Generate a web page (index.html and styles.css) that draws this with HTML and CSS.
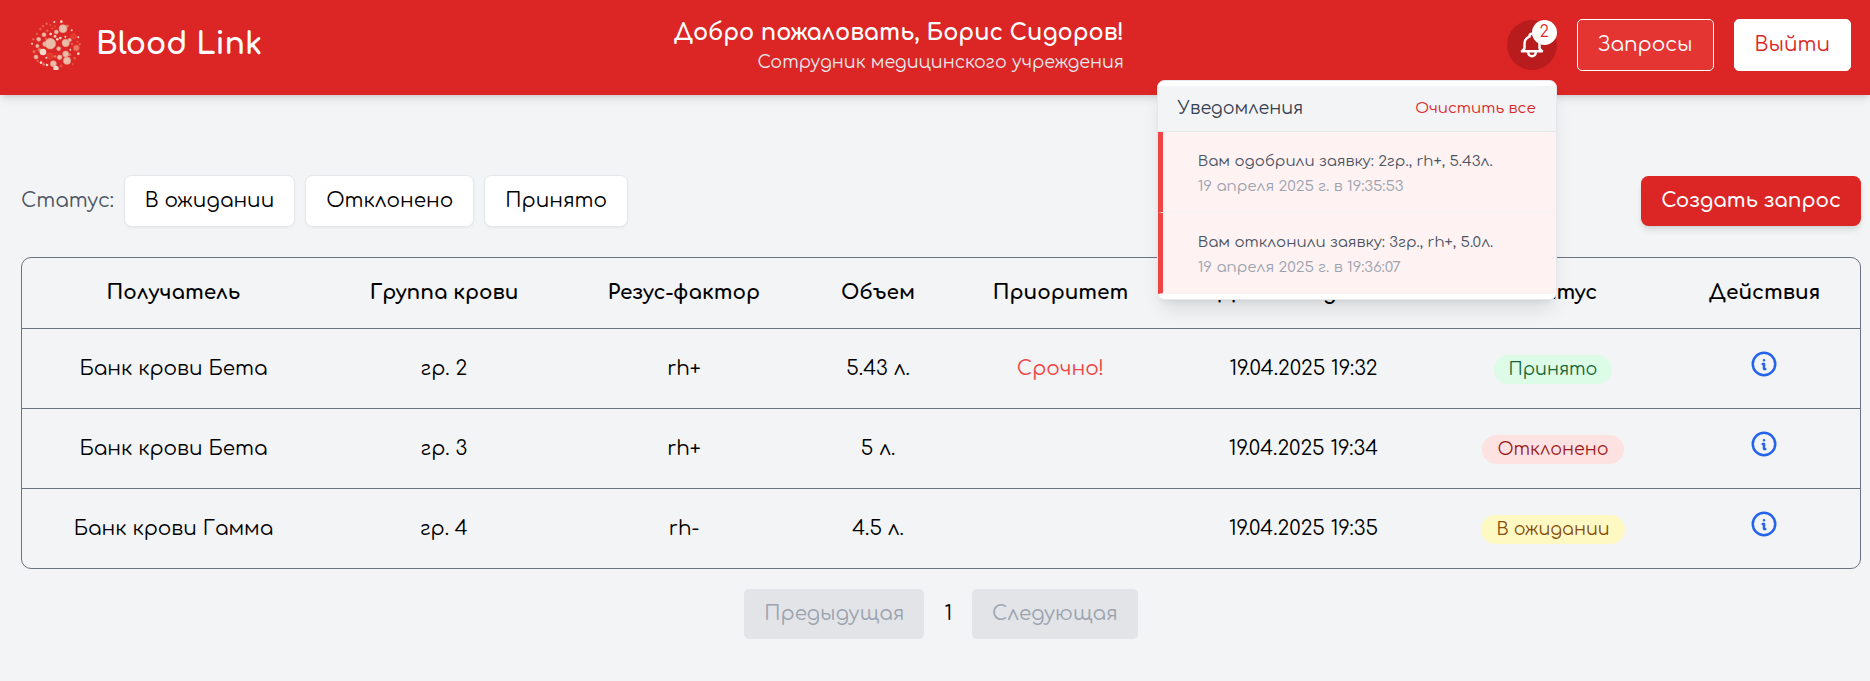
FILE: index.html
```html
<!DOCTYPE html>
<html lang="ru">
<head>
<meta charset="utf-8">
<title>Blood Link</title>
<link rel="stylesheet" href="styles.css">
</head>
<body>
<svg class="defs" aria-hidden="true">
  <symbol id="info" viewBox="0 0 24 24"><path d="M3 12a9 9 0 1 0 18 0a9 9 0 0 0 -18 0M12 9h.01M11 12h1v4h1" fill="none" stroke="currentColor" stroke-width="2" stroke-linecap="round" stroke-linejoin="round"/></symbol>
</svg>
<header class="topbar">
  <div class="brand">
    <svg class="logo" viewBox="15 15 150 150">
      <g fill="#ec7865" stroke="#e2503f" stroke-width="2">
        <circle cx="151" cy="99" r="9"/><circle cx="143" cy="64" r="8" fill="#e53a2b"/><circle cx="72" cy="123" r="9" fill="#e53a2b"/><circle cx="41" cy="105" r="6"/><circle cx="131" cy="119" r="4"/><circle cx="60" cy="72" r="3"/><circle cx="87" cy="124" r="4"/><circle cx="33" cy="57" r="3"/><circle cx="43" cy="42" r="3"/><circle cx="51" cy="33" r="3"/><circle cx="62" cy="26" r="3"/><circle cx="124" cy="33" r="4"/><circle cx="24" cy="110" r="4"/><circle cx="35" cy="138" r="3"/><circle cx="53" cy="148" r="4"/><circle cx="146" cy="130" r="3"/><circle cx="161" cy="88" r="3"/><circle cx="64" cy="47" r="3"/><circle cx="79" cy="40" r="2"/><circle cx="73" cy="30" r="2"/><circle cx="86" cy="34" r="2"/><circle cx="22" cy="73" r="3"/><circle cx="138" cy="87" r="3"/><circle cx="154" cy="80" r="2"/><circle cx="105" cy="153" r="3"/><circle cx="140" cy="147" r="2"/>
      </g>
      <g fill="#e9bda9" stroke="#e69a8a" stroke-width="2">
        <circle cx="111" cy="41" r="12"/><circle cx="57" cy="87" r="7"/><circle cx="73" cy="86" r="16"/><circle cx="119" cy="84" r="11"/><circle cx="131" cy="75" r="5"/><circle cx="123" cy="137" r="11"/><circle cx="119" cy="117" r="9"/><circle cx="82" cy="146" r="9"/><circle cx="54" cy="59" r="6"/><circle cx="38" cy="73" r="6"/><circle cx="91" cy="51" r="6"/><circle cx="98" cy="101" r="6"/><circle cx="101" cy="127" r="7"/><circle cx="30" cy="126" r="6"/><circle cx="34" cy="93" r="5"/>
      </g>
      <g fill="#f0d9c9">
        <circle cx="51" cy="111" r="10"/><circle cx="90" cy="160" r="8"/><circle cx="106" cy="20" r="4"/><circle cx="85" cy="21" r="3"/><circle cx="18" cy="86" r="3"/><circle cx="74" cy="57" r="4"/><circle cx="87" cy="64" r="4"/><circle cx="103" cy="69" r="4"/><circle cx="94" cy="73" r="4"/><circle cx="61" cy="128" r="3"/><circle cx="63" cy="150" r="4"/><circle cx="133" cy="104" r="3"/><circle cx="157" cy="116" r="4"/><circle cx="45" cy="143" r="4"/><circle cx="157" cy="67" r="3"/><circle cx="118" cy="65" r="3"/><circle cx="137" cy="46" r="3"/>
      </g>
    </svg>
    <span class="brand-name">Blood Link</span>
  </div>
  <div class="welcome">
    <p class="welcome-title">Добро пожаловать, Борис Сидоров!</p>
    <p class="welcome-role">Сотрудник медицинского учреждения</p>
  </div>
  <div class="actions">
    <div class="bell">
      <svg class="bell-icon" viewBox="0 0 24 24" fill="none" stroke="currentColor" stroke-width="2" stroke-linecap="round" stroke-linejoin="round"><path d="M15 17h5l-1.405-1.405A2.032 2.032 0 0118 14.158V11a6.002 6.002 0 00-4-5.659V5a2 2 0 10-4 0v.341C7.67 6.165 6 8.388 6 11v3.159c0 .538-.214 1.055-.595 1.436L4 17h5m6 0v1a3 3 0 11-6 0v-1m6 0H9"/></svg>
      <span class="bell-count">2</span>
      <div class="dropdown">
        <div class="dropdown-head"><span class="dropdown-title">Уведомления</span><a class="clear">Очистить все</a></div>
        <div class="note"><p>Вам одобрили заявку: 2гр., rh+, 5.43л.</p><p class="note-date">19 апреля 2025 г. в 19:35:53</p></div>
        <div class="note"><p>Вам отклонили заявку: 3гр., rh+, 5.0л.</p><p class="note-date">19 апреля 2025 г. в 19:36:07</p></div>
      </div>
    </div>
    <button class="btn btn-outline">Запросы</button>
    <button class="btn btn-white">Выйти</button>
  </div>
</header>
<main class="content">
  <div class="toolbar">
    <div class="filters">
      <span class="filter-label">Статус:</span>
      <button class="filter">В ожидании</button>
      <button class="filter">Отклонено</button>
      <button class="filter">Принято</button>
    </div>
    <button class="create">Создать запрос</button>
  </div>
  <div class="table">
    <div class="row head"><span>Получатель</span><span>Группа крови</span><span>Резус-фактор</span><span>Объем</span><span>Приоритет</span><span>Дата создания</span><span>Статус</span><span>Действия</span></div>
    <div class="row"><span>Банк крови Бета</span><span>гр. 2</span><span>rh+</span><span>5.43 л.</span><span class="urgent">Срочно!</span><span>19.04.2025 19:32</span><span><b class="badge green">Принято</b></span><span><svg class="info"><use href="#info"/></svg></span></div>
    <div class="row"><span>Банк крови Бета</span><span>гр. 3</span><span>rh+</span><span>5 л.</span><span></span><span>19.04.2025 19:34</span><span><b class="badge red">Отклонено</b></span><span><svg class="info"><use href="#info"/></svg></span></div>
    <div class="row"><span>Банк крови Гамма</span><span>гр. 4</span><span>rh-</span><span>4.5 л.</span><span></span><span>19.04.2025 19:35</span><span><b class="badge yellow">В ожидании</b></span><span><svg class="info"><use href="#info"/></svg></span></div>
  </div>
  <div class="pager">
    <button class="page-btn">Предыдущая</button>
    <span>1</span>
    <button class="page-btn">Следующая</button>
  </div>
</main>
</body>
</html>
```

FILE: styles.css
```css
* { box-sizing: border-box; margin: 0; padding: 0; }
body {
  font-family: Comfortaa, "DejaVu Sans", sans-serif;
  font-size: 20px;
  line-height: 30px;
  color: #000;
  background: #f3f4f6;
  min-height: 681px;
  overflow: hidden;
}
button { font: inherit; border: 0; white-space: nowrap; }
.defs { position: absolute; width: 0; height: 0; }

.topbar {
  position: relative;
  z-index: 2;
  display: flex;
  justify-content: space-between;
  align-items: center;
  height: 95px;
  padding: 0 19px 5px 31px;
  background: #dc2626;
  color: #fff;
  box-shadow: 0 5px 7.5px -1px rgba(0,0,0,.1), 0 2.5px 5px -2.5px rgba(0,0,0,.1);
}
.brand { display: flex; align-items: center; gap: 15px; width: 500px; }
.logo { width: 50px; height: 50px; }
.brand-name { font-size: 30px; line-height: 40px; font-weight: 700; }
.welcome { text-align: right; width: 593px; }
.welcome-title { font-size: 22.5px; line-height: 35px; font-weight: 700; }
.welcome-role { font-size: 17.5px; line-height: 25px; color: #e5e7eb; }
.actions { flex: 1; display: flex; justify-content: flex-end; align-items: center; gap: 20px; }
.bell {
  position: relative;
  display: grid;
  place-items: center;
  width: 50px;
  height: 50px;
  border-radius: 50%;
  background: #b91c1c;
}
.bell-icon { width: 30px; height: 30px; }
.bell-count {
  position: absolute;
  top: 0;
  right: 0;
  width: 25px;
  height: 25px;
  border-radius: 50%;
  background: #fff;
  color: #dc2626;
  font-size: 16px;
  line-height: 24px;
  text-align: center;
}
.btn { height: 52px; padding: 0 20px; border: 1px solid #fff; border-radius: 5px; }
.btn-outline { background: #e43533; color: #fff; }
.btn-white { background: #fff; color: #dc2626; }

.dropdown {
  position: absolute;
  top: 60px;
  right: 0;
  width: 400px;
  padding: 5px 0;
  border: 1px solid #e5e7eb;
  border-radius: 7.5px;
  background: #fff;
  box-shadow: 0 12.5px 19px -4px rgba(0,0,0,.1), 0 5px 7.5px -5px rgba(0,0,0,.1);
}
.dropdown-head {
  display: flex;
  justify-content: space-between;
  align-items: center;
  height: 46px;
  padding: 0 20px;
  background: #f3f4f6;
  border-bottom: 1px solid #e5e7eb;
}
.dropdown-title { font-size: 17.5px; color: #374151; }
.clear { font-size: 15px; color: #dc2626; }
.note {
  height: 81px;
  padding: 17px 35px 0 35px;
  border-left: 5px solid #ef4444;
  border-bottom: 1px solid #f3f4f6;
  background: #fef2f2;
  font-size: 15px;
  line-height: 25px;
  color: #4b5563;
}
.note-date { color: #9ca3af; }

.content { padding: 80px 9px 0 21px; }
.toolbar { display: flex; justify-content: space-between; align-items: center; height: 52px; }
.filters { display: flex; align-items: center; gap: 10px; }
.filter-label { color: #4b5563; }
.filter {
  height: 52px;
  padding: 0 20px;
  border: 1px solid #e5e7eb;
  border-radius: 7.5px;
  background: #fff;
  color: #000;
  box-shadow: 0 1px 2.5px rgba(0,0,0,.05);
}
.create {
  height: 50px;
  padding: 0 20px;
  border-radius: 7.5px;
  background: #dc2626;
  color: #fff;
  font-weight: 600;
  box-shadow: 0 5px 7.5px -1px rgba(0,0,0,.1), 0 2.5px 5px -2.5px rgba(0,0,0,.1);
}
.table { margin-top: 30px; border: 1px solid #6b7280; border-radius: 10px; }
.row {
  display: grid;
  grid-template-columns: 303px 238px 242px 146px 219px 267px 232px 1fr;
  align-items: center;
  height: 80px;
  text-align: center;
  border-top: 1px solid #6b7280;
}
.head { height: 70px; border-top: 0; font-weight: 700; }
.urgent { color: #ef4444; }
.badge {
  display: inline-block;
  height: 29px;
  padding: 0 15px;
  border-radius: 15px;
  font-size: 17.5px;
  line-height: 29px;
  font-weight: 400;
  vertical-align: middle;
}
.green { background: #dcfce7; color: #166534; }
.red { background: #fee2e2; color: #991b1b; }
.yellow { background: #fef9c3; color: #854d0e; }
.info { display: inline-block; width: 30px; height: 30px; margin: 0 2px 9px 0; color: #2563eb; vertical-align: middle; }
.pager { display: flex; justify-content: center; align-items: center; gap: 20px; margin-top: 20px; }
.page-btn { height: 50px; padding: 0 20px; border-radius: 5px; background: #e2e4e8; color: #9ca3af; }
```
